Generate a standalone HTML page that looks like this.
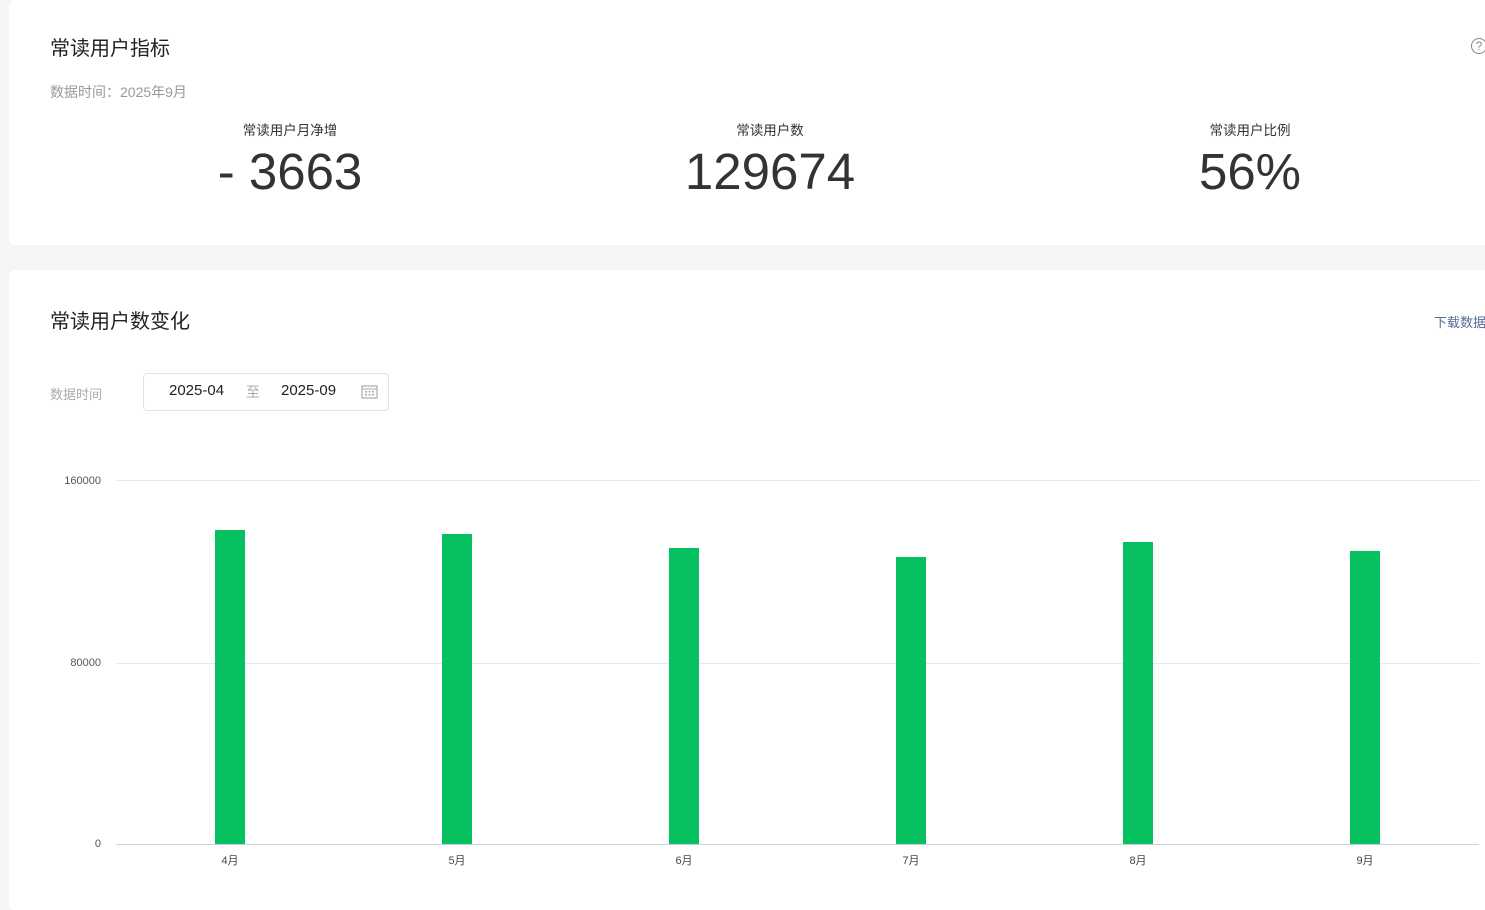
<!DOCTYPE html>
<html><head><meta charset="utf-8"><style>
*{margin:0;padding:0;box-sizing:border-box}
body{width:1485px;height:897px;overflow:hidden;background:#f4f5f7;font-family:"Liberation Sans","Noto Sans CJK SC",sans-serif;position:relative}
.card{position:absolute;left:9px;width:1490px;background:#fff;border-radius:6px}
.t{position:absolute;font-size:20px;color:#222}
.abs{position:absolute}
.lbl{position:absolute;font-size:13.5px;color:#333;text-align:center;width:300px}
.num{position:absolute;font-size:51px;color:#333;text-align:center;width:300px;font-family:"Liberation Sans",sans-serif}
.bar{position:absolute;width:30px;background:#07c160;bottom:53px}
.xl{position:absolute;top:852px;font-size:11px;color:#444;width:40px;text-align:center}
.yl{position:absolute;left:40px;width:61px;text-align:right;font-size:11px;color:#555}
.gl{position:absolute;left:116px;width:1363px;height:1px;background:#e6e8eb}
</style></head><body>
<div class="card" style="top:0;height:245px"></div>
<div class="card" style="top:270px;height:640px"></div>
<div class="t" style="left:50px;top:32px">常读用户指标</div>
<div class="abs" style="left:1471px;top:38px;width:16px;height:16px;border:1px solid #888;border-radius:50%;font-size:12px;color:#888;line-height:14px;text-align:center">?</div>
<div class="abs" style="left:50px;top:82px;font-size:14px;color:#999">数据时间：2025年9月</div>
<div class="lbl" style="left:140px;top:119px">常读用户月净增</div>
<div class="lbl" style="left:620px;top:119px">常读用户数</div>
<div class="lbl" style="left:1100px;top:119px">常读用户比例</div>
<div class="num" style="left:140px;top:142px">- 3663</div>
<div class="num" style="left:620px;top:142px">129674</div>
<div class="num" style="left:1100px;top:142px">56%</div>
<div class="t" style="left:50px;top:305px">常读用户数变化</div>
<div class="abs" style="left:1434px;top:312px;font-size:13px;color:#576b95;white-space:nowrap">下载数据</div>
<div class="abs" style="left:50px;top:384px;font-size:13px;color:#aaa">数据时间</div>
<div class="abs" style="left:143px;top:373px;width:246px;height:38px;border:1px solid #e2e2e2;border-radius:4px"></div>
<div class="abs" style="left:169px;top:382px;font-size:15px;color:#222">2025-04</div>
<div class="abs" style="left:246px;top:382px;font-size:14px;color:#aaa">至</div>
<div class="abs" style="left:281px;top:382px;font-size:15px;color:#222">2025-09</div>
<svg class="abs" style="left:361px;top:384px" width="17" height="15" viewBox="0 0 17 15"><rect x="1" y="2" width="15" height="12" fill="none" stroke="#aaa" stroke-width="1.2"/><line x1="1" y1="5" x2="16" y2="5" stroke="#aaa"/><g fill="#aaa"><rect x="4" y="7" width="2" height="1.5"/><rect x="7.5" y="7" width="2" height="1.5"/><rect x="11" y="7" width="2" height="1.5"/><rect x="4" y="10" width="2" height="1.5"/><rect x="7.5" y="10" width="2" height="1.5"/><rect x="11" y="10" width="2" height="1.5"/></g></svg>
<div class="yl" style="top:475px">160000</div>
<div class="yl" style="top:657px">80000</div>
<div class="yl" style="top:838px">0</div>
<div class="gl" style="top:480px"></div>
<div class="gl" style="top:663px"></div>
<div class="gl" style="top:844px;background:#c8d0dc"></div>
<div class="bar" style="left:215px;top:530px"></div>
<div class="bar" style="left:442px;top:534px"></div>
<div class="bar" style="left:669px;top:548px"></div>
<div class="bar" style="left:896px;top:557px"></div>
<div class="bar" style="left:1123px;top:542px"></div>
<div class="bar" style="left:1350px;top:551px"></div>
<div class="xl" style="left:210px">4月</div>
<div class="xl" style="left:437px">5月</div>
<div class="xl" style="left:664px">6月</div>
<div class="xl" style="left:891px">7月</div>
<div class="xl" style="left:1118px">8月</div>
<div class="xl" style="left:1345px">9月</div>
</body></html>
